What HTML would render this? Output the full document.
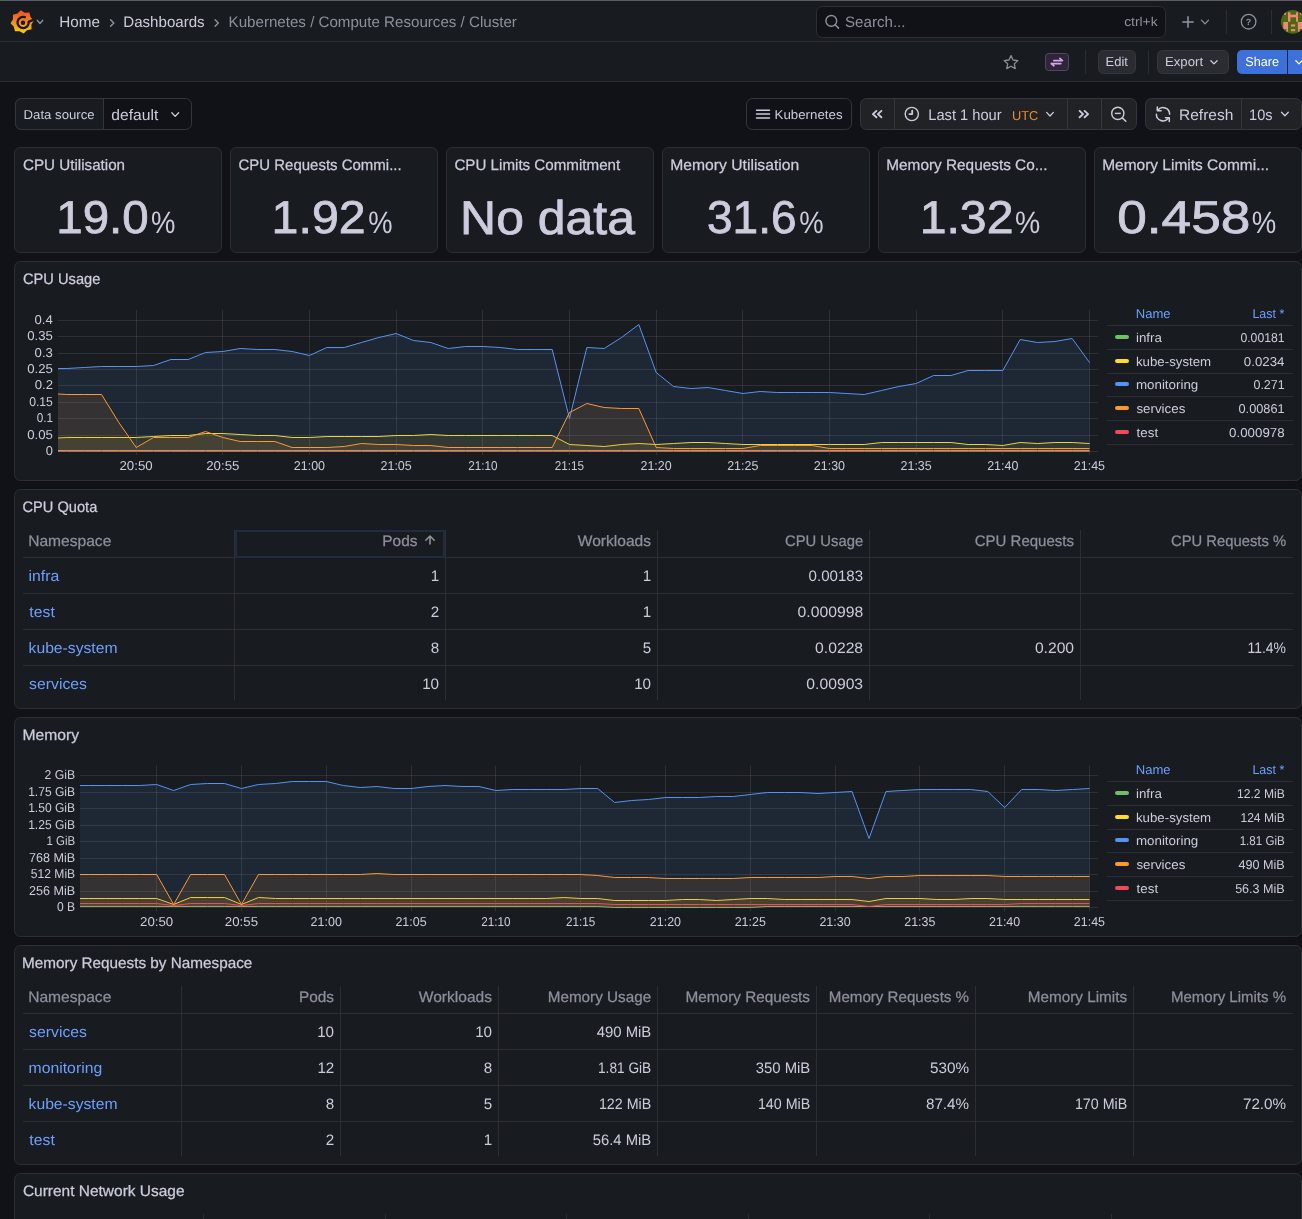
<!DOCTYPE html>
<html><head><meta charset="utf-8"><title>Kubernetes / Compute Resources / Cluster - Dashboards - Grafana</title>
<style>
html,body{margin:0;padding:0;background:#111217;width:1302px;height:1219px;overflow:hidden}
svg{display:block;font-family:"Liberation Sans", sans-serif;will-change:transform}
svg text{text-rendering:geometricPrecision}
</style></head><body>
<svg width="1302" height="1219" viewBox="0 0 1302 1219">
<rect x="0" y="0" width="1302" height="1219" rx="0" fill="#111217" />
<rect x="0" y="0" width="1302" height="82" rx="0" fill="#181b1f" />
<rect x="0" y="0" width="1302" height="1" rx="0" fill="#5c5b62" />
<rect x="0" y="41" width="1302" height="1" rx="0" fill="#2c2e34" />
<rect x="0" y="81" width="1302" height="1" rx="0" fill="#2c2e34" />
<defs><linearGradient id="glg" x1="0" y1="0" x2="0" y2="1"><stop offset="0.15" stop-color="#f55a25"/><stop offset="0.95" stop-color="#fcc80c"/></linearGradient></defs>
<path d="M20.76,10.19 L24.77,12.65 L29.46,12.60 L30.56,17.17 L33.91,20.46 L31.45,24.47 L31.50,29.16 L26.93,30.26 L23.64,33.61 L19.63,31.15 L14.94,31.20 L13.84,26.63 L10.49,23.34 L12.95,19.33 L12.90,14.64 L17.47,13.54Z" stroke="none" fill="url(#glg)" stroke-width="1" stroke="url(#glg)" stroke-width="1.4" stroke-linejoin="round"/>
<path d="M32.80,20.10 Q29.85,21.12 28.65,21.72 A5.6,5.6 0 1 1 24.83,17.17" stroke="#181b1f" fill="none" stroke-width="2.4" stroke-linecap="round" stroke-linejoin="round"/>
<circle cx="22.999999999999996" cy="22.8" r="2.2" fill="#181b1f"/>
<path d="M37.2,20.299999999999997 L40,23.5 L42.8,20.299999999999997" stroke="#8e8f9c" fill="none" stroke-width="1.3" stroke-linecap="round" stroke-linejoin="round"/>
<text x="59.18" y="27" font-size="15.2" fill="#ccccdc" textLength="40.75" lengthAdjust="spacingAndGlyphs" >Home</text>
<path d="M110.6,19.7 L113.8,23 L110.6,26.3" stroke="#8e8f9c" fill="none" stroke-width="1.5" stroke-linecap="round" stroke-linejoin="round"/>
<text x="123.29" y="27" font-size="15.2" fill="#ccccdc" textLength="81.37" lengthAdjust="spacingAndGlyphs" >Dashboards</text>
<path d="M215.1,19.7 L218.3,23 L215.1,26.3" stroke="#8e8f9c" fill="none" stroke-width="1.5" stroke-linecap="round" stroke-linejoin="round"/>
<text x="228.59" y="27" font-size="15.2" fill="#8e8f9c" textLength="288.31" lengthAdjust="spacingAndGlyphs" >Kubernetes / Compute Resources / Cluster</text>
<rect x="816.5" y="6.5" width="349" height="31" rx="6" fill="#111217" stroke="#2c2e34" stroke-width="1" />
<circle cx="831.3" cy="20.9" r="5.4" fill="none" stroke="#8e8f9c" stroke-width="1.4"/>
<line x1="835.2" y1="24.8" x2="838.5" y2="28.1" stroke="#8e8f9c" stroke-width="1.5" stroke-linecap="round"/>
<text x="845.02" y="27.1" font-size="15.2" fill="#8e8f9c" textLength="60.47" lengthAdjust="spacingAndGlyphs" >Search...</text>
<text x="1124.15" y="26.2" font-size="12.9" fill="#8e8f9c" textLength="33.48" lengthAdjust="spacingAndGlyphs" >ctrl+k</text>
<line x1="1182.3" y1="22" x2="1193.7" y2="22" stroke="#8e8f9c" stroke-width="1.6" />
<line x1="1188" y1="16.2" x2="1188" y2="27.8" stroke="#8e8f9c" stroke-width="1.6" />
<path d="M1201.5,20.15 L1205,23.85 L1208.5,20.15" stroke="#8e8f9c" fill="none" stroke-width="1.3" stroke-linecap="round" stroke-linejoin="round"/>
<rect x="1226" y="10" width="1" height="24" rx="0" fill="#2c2e34" />
<circle cx="1248.6" cy="21.7" r="7.3" fill="none" stroke="#8e8f9c" stroke-width="1.3"/>
<text x="1248.6" y="25.4" font-size="9" fill="#8e8f9c" text-anchor="middle" font-weight="bold" >?</text>
<rect x="1271" y="10" width="1" height="24" rx="0" fill="#2c2e34" />
<clipPath id="avc"><circle cx="1292.8" cy="21.8" r="11.9"/></clipPath>
<g clip-path="url(#avc)"><rect x="1280" y="9" width="24" height="26" fill="#4a6a10"/><rect x="1288" y="12.3" width="2.4" height="9.4" fill="#f5857c"/><rect x="1296" y="12.3" width="2" height="9.4" fill="#f5857c"/><rect x="1288" y="14.7" width="10" height="2.6" fill="#f5857c"/><rect x="1283.9" y="12.3" width="2.1" height="2.4" fill="#f5857c"/><rect x="1300" y="12.3" width="3" height="2.4" fill="#f5857c"/><rect x="1283.3" y="22" width="4.7" height="7.1" fill="#f5857c"/><rect x="1297.8" y="22" width="5" height="7.1" fill="#f5857c"/><rect x="1286.5" y="29" width="1.5" height="2.7" fill="#f5857c"/><rect x="1298" y="29" width="1.6" height="2.7" fill="#f5857c"/><rect x="1291" y="24.4" width="4.2" height="2.1" fill="#f5857c"/><rect x="1291" y="29.1" width="4.2" height="2.1" fill="#f5857c"/></g>
<path d="M1011.00,55.60 L1013.03,60.00 L1017.85,60.58 L1014.29,63.87 L1015.23,68.62 L1011.00,66.26 L1006.77,68.62 L1007.71,63.87 L1004.15,60.58 L1008.97,60.00Z" stroke="#8e8f9c" fill="none" stroke-width="1.3" stroke-linejoin="round"/>
<rect x="1045.5" y="53.5" width="23" height="17" rx="3" fill="#2e2638" stroke="#5a3f6e" stroke-width="1" />
<path d="M1053.8,60.6 L1062.4,60.6 M1059.9,58.3 L1062.4,60.6" stroke="#d2a6ea" fill="none" stroke-width="1.7" stroke-linecap="round" stroke-linejoin="round"/>
<path d="M1060.8,63.6 L1051.3,63.6 M1053.9,65.8 L1051.3,63.6" stroke="#d2a6ea" fill="none" stroke-width="1.7" stroke-linecap="round" stroke-linejoin="round"/>
<rect x="1085" y="50" width="1" height="24" rx="0" fill="#2c2e34" />
<rect x="1098.5" y="50.5" width="37" height="23" rx="5" fill="#2a2c31" stroke="#35373d" stroke-width="1" />
<text x="1105.56" y="65.8" font-size="12.9" fill="#ccccdc" textLength="22.34" lengthAdjust="spacingAndGlyphs" >Edit</text>
<rect x="1148" y="50" width="1" height="24" rx="0" fill="#2c2e34" />
<rect x="1157.5" y="50.5" width="71" height="23" rx="5" fill="#2a2c31" stroke="#35373d" stroke-width="1" />
<text x="1164.94" y="65.8" font-size="12.9" fill="#ccccdc" textLength="38.19" lengthAdjust="spacingAndGlyphs" >Export</text>
<path d="M1210.9,60.699999999999996 L1214,63.9 L1217.1,60.699999999999996" stroke="#ccccdc" fill="none" stroke-width="1.3" stroke-linecap="round" stroke-linejoin="round"/>
<rect x="1237" y="50" width="80" height="24" rx="5" fill="#3d71d9" />
<rect x="1287" y="50" width="1" height="24" rx="0" fill="#1c2438" />
<text x="1245.23" y="66" font-size="12.9" fill="#ffffff" textLength="33.78" lengthAdjust="spacingAndGlyphs" >Share</text>
<path d="M1295.9,60.699999999999996 L1299,63.9 L1302.1,60.699999999999996" stroke="#ffffff" fill="none" stroke-width="1.3" stroke-linecap="round" stroke-linejoin="round"/>
<rect x="15.5" y="98.5" width="176" height="31" rx="6" fill="#111217" stroke="#34363c" stroke-width="1" />
<path d="M21.5,98.5 L103.5,98.5 L103.5,129.5 L21.5,129.5 A6,6 0 0 1 15.5,123.5 L15.5,104.5 A6,6 0 0 1 21.5,98.5Z" fill="#181b1f" stroke="#34363c"/>
<text x="23.55" y="119.2" font-size="12.9" fill="#ccccdc" textLength="71.07" lengthAdjust="spacingAndGlyphs" >Data source</text>
<text x="111.37" y="120" font-size="15.2" fill="#ccccdc" textLength="46.94" lengthAdjust="spacingAndGlyphs" >default</text>
<path d="M171.79999999999998,112.8 L175.2,116.39999999999999 L178.6,112.8" stroke="#ccccdc" fill="none" stroke-width="1.3" stroke-linecap="round" stroke-linejoin="round"/>
<rect x="746.5" y="98.5" width="105" height="31" rx="6" fill="#111217" stroke="#34363c" stroke-width="1" />
<line x1="756.5" y1="110.2" x2="769.5" y2="110.2" stroke="#ccccdc" stroke-width="1.5" stroke-linecap="round"/>
<line x1="756.5" y1="114.1" x2="769.5" y2="114.1" stroke="#ccccdc" stroke-width="1.5" stroke-linecap="round"/>
<line x1="756.5" y1="118" x2="769.5" y2="118" stroke="#ccccdc" stroke-width="1.5" stroke-linecap="round"/>
<text x="774.54" y="119.2" font-size="12.9" fill="#ccccdc" textLength="68.03" lengthAdjust="spacingAndGlyphs" >Kubernetes</text>
<rect x="860.5" y="98.5" width="276" height="31" rx="6" fill="#202226" stroke="#34363c" stroke-width="1" />
<rect x="894" y="99" width="1" height="30" rx="0" fill="#34363c" />
<rect x="1067" y="99" width="1" height="30" rx="0" fill="#34363c" />
<rect x="1101" y="99" width="1" height="30" rx="0" fill="#34363c" />
<path d="M876.4,110.9 L872.9,114.1 L876.4,117.3 M881.4,110.9 L877.9,114.1 L881.4,117.3" stroke="#ccccdc" fill="none" stroke-width="1.9" stroke-linecap="round" stroke-linejoin="round"/>
<circle cx="911.8" cy="114" r="6.6" fill="none" stroke="#ccccdc" stroke-width="1.4"/>
<path d="M912.2,110.6 L912.2,114.1 L909.4,114.1" stroke="#ccccdc" fill="none" stroke-width="1.8" stroke-linecap="round" stroke-linejoin="round"/>
<text x="928.23" y="119.8" font-size="15.2" fill="#ccccdc" textLength="73.45" lengthAdjust="spacingAndGlyphs" >Last 1 hour</text>
<text x="1011.94" y="119.8" font-size="12.9" fill="#eb8b2a" textLength="26.31" lengthAdjust="spacingAndGlyphs" >UTC</text>
<path d="M1046.6,112.4 L1050,116.0 L1053.4,112.4" stroke="#ccccdc" fill="none" stroke-width="1.3" stroke-linecap="round" stroke-linejoin="round"/>
<path d="M1079.6,110.9 L1083.1,114.1 L1079.6,117.3 M1084.6,110.9 L1088.1,114.1 L1084.6,117.3" stroke="#ccccdc" fill="none" stroke-width="1.9" stroke-linecap="round" stroke-linejoin="round"/>
<circle cx="1117.8" cy="113.4" r="6.1" fill="none" stroke="#ccccdc" stroke-width="1.4"/>
<line x1="1114.8" y1="113.4" x2="1120.8" y2="113.4" stroke="#ccccdc" stroke-width="1.4" />
<line x1="1122.3" y1="117.9" x2="1125.8" y2="121.2" stroke="#ccccdc" stroke-width="1.5" stroke-linecap="round"/>
<rect x="1145.5" y="98.5" width="156" height="31" rx="6" fill="#202226" stroke="#34363c" stroke-width="1" />
<rect x="1241" y="99" width="1" height="30" rx="0" fill="#34363c" />
<path d="M1157.9,110.1 A6.6,6.6 0 0 1 1169.6,114.3 M1156.4,114.3 A6.6,6.6 0 0 0 1168.1,118.5" stroke="#ccccdc" fill="none" stroke-width="1.5" stroke-linecap="round"/>
<path d="M1157.3,106.9 L1157.3,110.8 L1161.2,110.8 M1169.3,121.6 L1169.3,117.7 L1165.4,117.7" stroke="#ccccdc" fill="none" stroke-width="1.5" stroke-linecap="round" stroke-linejoin="round"/>
<text x="1178.96" y="120.1" font-size="15.2" fill="#ccccdc" textLength="54.48" lengthAdjust="spacingAndGlyphs" >Refresh</text>
<text x="1249.11" y="120.1" font-size="15.2" fill="#ccccdc" textLength="23.43" lengthAdjust="spacingAndGlyphs" >10s</text>
<path d="M1281.5,112.2 L1284.9,115.8 L1288.3000000000002,112.2" stroke="#ccccdc" fill="none" stroke-width="1.3" stroke-linecap="round" stroke-linejoin="round"/>
<rect x="14.5" y="147.5" width="207" height="105" rx="6" fill="#181b1f" stroke="#2c2e34" stroke-width="1" />
<text x="22.94" y="169.8" font-size="15.2" fill="#ccccdc" stroke="#ccccdc" stroke-width="0.25">CPU Utilisation</text>
<text x="56.34" y="232.9" font-size="45.96857142857143" fill="#ccccdc" textLength="92.38" lengthAdjust="spacingAndGlyphs" stroke="#ccccdc" stroke-width="0.8">19.0</text>
<text x="151.04" y="233.0" font-size="31.038129496402888" fill="#ccccdc" textLength="24.40" lengthAdjust="spacingAndGlyphs" >%</text>
<rect x="230.5" y="147.5" width="207" height="105" rx="6" fill="#181b1f" stroke="#2c2e34" stroke-width="1" />
<text x="238.45" y="169.8" font-size="15.2" fill="#ccccdc" textLength="163.22" lengthAdjust="spacingAndGlyphs" stroke="#ccccdc" stroke-width="0.25">CPU Requests Commi...</text>
<text x="271.57" y="232.9" font-size="45.96857142857143" fill="#ccccdc" textLength="94.11" lengthAdjust="spacingAndGlyphs" stroke="#ccccdc" stroke-width="0.8">1.92</text>
<text x="368.24" y="233.0" font-size="31.038129496402888" fill="#ccccdc" textLength="24.29" lengthAdjust="spacingAndGlyphs" >%</text>
<rect x="446.5" y="147.5" width="207" height="105" rx="6" fill="#181b1f" stroke="#2c2e34" stroke-width="1" />
<text x="454.44" y="169.8" font-size="15.2" fill="#ccccdc" textLength="165.75" lengthAdjust="spacingAndGlyphs" stroke="#ccccdc" stroke-width="0.25">CPU Limits Commitment</text>
<text x="460.10" y="233.5" font-size="47.32413793103448" fill="#ccccdc" textLength="174.92" lengthAdjust="spacingAndGlyphs" stroke="#ccccdc" stroke-width="0.8">No data</text>
<rect x="662.5" y="147.5" width="207" height="105" rx="6" fill="#181b1f" stroke="#2c2e34" stroke-width="1" />
<text x="670.25" y="169.8" font-size="15.2" fill="#ccccdc" textLength="128.96" lengthAdjust="spacingAndGlyphs" stroke="#ccccdc" stroke-width="0.25">Memory Utilisation</text>
<text x="707.06" y="232.9" font-size="45.96857142857143" fill="#ccccdc" stroke="#ccccdc" stroke-width="0.8">31.6</text>
<text x="799.34" y="233.0" font-size="31.038129496402888" fill="#ccccdc" textLength="24.40" lengthAdjust="spacingAndGlyphs" >%</text>
<rect x="878.5" y="147.5" width="207" height="105" rx="6" fill="#181b1f" stroke="#2c2e34" stroke-width="1" />
<text x="886.27" y="169.8" font-size="15.2" fill="#ccccdc" textLength="161.27" lengthAdjust="spacingAndGlyphs" stroke="#ccccdc" stroke-width="0.25">Memory Requests Co...</text>
<text x="919.69" y="232.9" font-size="45.96857142857143" fill="#ccccdc" textLength="93.79" lengthAdjust="spacingAndGlyphs" stroke="#ccccdc" stroke-width="0.8">1.32</text>
<text x="1014.91" y="233.0" font-size="31.038129496402888" fill="#ccccdc" textLength="25.26" lengthAdjust="spacingAndGlyphs" >%</text>
<rect x="1094.5" y="147.5" width="207" height="105" rx="6" fill="#181b1f" stroke="#2c2e34" stroke-width="1" />
<text x="1102.16" y="169.8" font-size="15.2" fill="#ccccdc" textLength="166.89" lengthAdjust="spacingAndGlyphs" stroke="#ccccdc" stroke-width="0.25">Memory Limits Commi...</text>
<text x="1117.27" y="232.9" font-size="45.96857142857143" fill="#ccccdc" textLength="133.09" lengthAdjust="spacingAndGlyphs" stroke="#ccccdc" stroke-width="0.8">0.458</text>
<text x="1251.64" y="233.0" font-size="31.038129496402888" fill="#ccccdc" textLength="24.51" lengthAdjust="spacingAndGlyphs" >%</text>
<rect x="14.5" y="261.5" width="1287" height="219" rx="6" fill="#181b1f" stroke="#2c2e34" stroke-width="1" />
<rect x="14.5" y="489.5" width="1287" height="219" rx="6" fill="#181b1f" stroke="#2c2e34" stroke-width="1" />
<rect x="14.5" y="717.5" width="1287" height="219" rx="6" fill="#181b1f" stroke="#2c2e34" stroke-width="1" />
<rect x="14.5" y="945.5" width="1287" height="219" rx="6" fill="#181b1f" stroke="#2c2e34" stroke-width="1" />
<rect x="14.5" y="1173.5" width="1287" height="119" rx="6" fill="#181b1f" stroke="#2c2e34" stroke-width="1" />
<text x="22.97" y="283.9" font-size="15.2" fill="#ccccdc" textLength="77.39" lengthAdjust="spacingAndGlyphs" stroke="#ccccdc" stroke-width="0.25">CPU Usage</text>
<text x="22.47" y="512" font-size="15.2" fill="#ccccdc" textLength="74.88" lengthAdjust="spacingAndGlyphs" stroke="#ccccdc" stroke-width="0.25">CPU Quota</text>
<text x="22.45" y="739.9" font-size="15.2" fill="#ccccdc" textLength="56.58" lengthAdjust="spacingAndGlyphs" stroke="#ccccdc" stroke-width="0.25">Memory</text>
<text x="22.08" y="968.3" font-size="15.2" fill="#ccccdc" textLength="230.24" lengthAdjust="spacingAndGlyphs" stroke="#ccccdc" stroke-width="0.25">Memory Requests by Namespace</text>
<text x="22.93" y="1195.7" font-size="15.2" fill="#ccccdc" textLength="161.62" lengthAdjust="spacingAndGlyphs" stroke="#ccccdc" stroke-width="0.25">Current Network Usage</text>
<rect x="234" y="530" width="1" height="170" rx="0" fill="#2c2e34" />
<rect x="445" y="530" width="1" height="170" rx="0" fill="#2c2e34" />
<rect x="657" y="530" width="1" height="170" rx="0" fill="#2c2e34" />
<rect x="869" y="530" width="1" height="170" rx="0" fill="#2c2e34" />
<rect x="1080" y="530" width="1" height="170" rx="0" fill="#2c2e34" />
<rect x="23" y="557" width="1270" height="1" rx="0" fill="#2c2e34" />
<rect x="23" y="593" width="1270" height="1" rx="0" fill="#2c2e34" />
<rect x="23" y="629" width="1270" height="1" rx="0" fill="#2c2e34" />
<rect x="23" y="665" width="1270" height="1" rx="0" fill="#2c2e34" />
<rect x="236" y="531" width="208" height="26" rx="0" fill="none" stroke="#202b3f" stroke-width="2" />
<text x="28.15" y="546" font-size="15.2" fill="#8e8f9c" textLength="83.21" lengthAdjust="spacingAndGlyphs" stroke="#8e8f9c" stroke-width="0.25">Namespace</text>
<path d="M430.0,544 L430.0,536 M425.8,540.2 L430.0,536 L434.2,540.2" stroke="#8e8f9c" fill="none" stroke-width="1.6" stroke-linecap="round" stroke-linejoin="round"/>
<text x="382.32" y="546" font-size="15.2" fill="#8e8f9c" textLength="35.11" lengthAdjust="spacingAndGlyphs" stroke="#8e8f9c" stroke-width="0.25">Pods</text>
<text x="577.82" y="546" font-size="15.2" fill="#8e8f9c" textLength="73.23" lengthAdjust="spacingAndGlyphs" stroke="#8e8f9c" stroke-width="0.25">Workloads</text>
<text x="784.95" y="546" font-size="15.2" fill="#8e8f9c" textLength="78.22" lengthAdjust="spacingAndGlyphs" stroke="#8e8f9c" stroke-width="0.25">CPU Usage</text>
<text x="974.76" y="546" font-size="15.2" fill="#8e8f9c" textLength="99.24" lengthAdjust="spacingAndGlyphs" stroke="#8e8f9c" stroke-width="0.25">CPU Requests</text>
<text x="1171.09" y="546" font-size="15.2" fill="#8e8f9c" textLength="114.94" lengthAdjust="spacingAndGlyphs" stroke="#8e8f9c" stroke-width="0.25">CPU Requests %</text>
<text x="28.57" y="581" font-size="15.2" fill="#6e9fff" textLength="30.69" lengthAdjust="spacingAndGlyphs" >infra</text>
<text x="430.75" y="581" font-size="15.2" fill="#ccccdc" >1</text>
<text x="642.75" y="581" font-size="15.2" fill="#ccccdc" >1</text>
<text x="808.59" y="581" font-size="15.2" fill="#ccccdc" textLength="54.51" lengthAdjust="spacingAndGlyphs" >0.00183</text>
<text x="29.36" y="617" font-size="15.2" fill="#6e9fff" textLength="25.40" lengthAdjust="spacingAndGlyphs" >test</text>
<text x="430.82" y="617" font-size="15.2" fill="#ccccdc" >2</text>
<text x="642.75" y="617" font-size="15.2" fill="#ccccdc" >1</text>
<text x="797.57" y="617" font-size="15.2" fill="#ccccdc" textLength="65.58" lengthAdjust="spacingAndGlyphs" >0.000998</text>
<text x="28.58" y="653" font-size="15.2" fill="#6e9fff" textLength="88.88" lengthAdjust="spacingAndGlyphs" >kube-system</text>
<text x="430.67" y="653" font-size="15.2" fill="#ccccdc" >8</text>
<text x="642.67" y="653" font-size="15.2" fill="#ccccdc" >5</text>
<text x="815.12" y="653" font-size="15.2" fill="#ccccdc" textLength="47.99" lengthAdjust="spacingAndGlyphs" >0.0228</text>
<text x="1034.90" y="653" font-size="15.2" fill="#ccccdc" textLength="39.19" lengthAdjust="spacingAndGlyphs" >0.200</text>
<text x="1247.52" y="653" font-size="15.2" fill="#ccccdc" textLength="38.49" lengthAdjust="spacingAndGlyphs" >11.4%</text>
<text x="29.13" y="689" font-size="15.2" fill="#6e9fff" textLength="57.81" lengthAdjust="spacingAndGlyphs" >services</text>
<text x="422.16" y="689" font-size="15.2" fill="#ccccdc" >10</text>
<text x="634.16" y="689" font-size="15.2" fill="#ccccdc" >10</text>
<text x="806.34" y="689" font-size="15.2" fill="#ccccdc" textLength="56.78" lengthAdjust="spacingAndGlyphs" >0.00903</text>
<rect x="181" y="986" width="1" height="170" rx="0" fill="#2c2e34" />
<rect x="340" y="986" width="1" height="170" rx="0" fill="#2c2e34" />
<rect x="498" y="986" width="1" height="170" rx="0" fill="#2c2e34" />
<rect x="657" y="986" width="1" height="170" rx="0" fill="#2c2e34" />
<rect x="816" y="986" width="1" height="170" rx="0" fill="#2c2e34" />
<rect x="975" y="986" width="1" height="170" rx="0" fill="#2c2e34" />
<rect x="1133" y="986" width="1" height="170" rx="0" fill="#2c2e34" />
<rect x="23" y="1013" width="1270" height="1" rx="0" fill="#2c2e34" />
<rect x="23" y="1049" width="1270" height="1" rx="0" fill="#2c2e34" />
<rect x="23" y="1085" width="1270" height="1" rx="0" fill="#2c2e34" />
<rect x="23" y="1121" width="1270" height="1" rx="0" fill="#2c2e34" />
<text x="28.15" y="1002" font-size="15.2" fill="#8e8f9c" textLength="83.21" lengthAdjust="spacingAndGlyphs" stroke="#8e8f9c" stroke-width="0.25">Namespace</text>
<text x="298.92" y="1002" font-size="15.2" fill="#8e8f9c" textLength="35.11" lengthAdjust="spacingAndGlyphs" stroke="#8e8f9c" stroke-width="0.25">Pods</text>
<text x="418.82" y="1002" font-size="15.2" fill="#8e8f9c" textLength="73.23" lengthAdjust="spacingAndGlyphs" stroke="#8e8f9c" stroke-width="0.25">Workloads</text>
<text x="547.68" y="1002" font-size="15.2" fill="#8e8f9c" textLength="103.50" lengthAdjust="spacingAndGlyphs" stroke="#8e8f9c" stroke-width="0.25">Memory Usage</text>
<text x="685.50" y="1002" font-size="15.2" fill="#8e8f9c" textLength="124.52" lengthAdjust="spacingAndGlyphs" stroke="#8e8f9c" stroke-width="0.25">Memory Requests</text>
<text x="828.83" y="1002" font-size="15.2" fill="#8e8f9c" textLength="140.21" lengthAdjust="spacingAndGlyphs" stroke="#8e8f9c" stroke-width="0.25">Memory Requests %</text>
<text x="1027.73" y="1002" font-size="15.2" fill="#8e8f9c" textLength="99.31" lengthAdjust="spacingAndGlyphs" stroke="#8e8f9c" stroke-width="0.25">Memory Limits</text>
<text x="1170.99" y="1002" font-size="15.2" fill="#8e8f9c" textLength="115.00" lengthAdjust="spacingAndGlyphs" stroke="#8e8f9c" stroke-width="0.25">Memory Limits %</text>
<text x="29.13" y="1037" font-size="15.2" fill="#6e9fff" textLength="57.81" lengthAdjust="spacingAndGlyphs" >services</text>
<text x="317.16" y="1037" font-size="15.2" fill="#ccccdc" >10</text>
<text x="475.16" y="1037" font-size="15.2" fill="#ccccdc" >10</text>
<text x="596.67" y="1037" font-size="15.2" fill="#ccccdc" textLength="54.63" lengthAdjust="spacingAndGlyphs" >490 MiB</text>
<text x="28.57" y="1073" font-size="15.2" fill="#6e9fff" textLength="73.64" lengthAdjust="spacingAndGlyphs" >monitoring</text>
<text x="317.39" y="1073" font-size="15.2" fill="#ccccdc" >12</text>
<text x="483.67" y="1073" font-size="15.2" fill="#ccccdc" >8</text>
<text x="598.00" y="1073" font-size="15.2" fill="#ccccdc" textLength="53.20" lengthAdjust="spacingAndGlyphs" >1.81 GiB</text>
<text x="755.67" y="1073" font-size="15.2" fill="#ccccdc" textLength="54.63" lengthAdjust="spacingAndGlyphs" >350 MiB</text>
<text x="929.90" y="1073" font-size="15.2" fill="#ccccdc" textLength="39.10" lengthAdjust="spacingAndGlyphs" >530%</text>
<text x="28.58" y="1109" font-size="15.2" fill="#6e9fff" textLength="88.88" lengthAdjust="spacingAndGlyphs" >kube-system</text>
<text x="325.67" y="1109" font-size="15.2" fill="#ccccdc" >8</text>
<text x="483.67" y="1109" font-size="15.2" fill="#ccccdc" >5</text>
<text x="598.94" y="1109" font-size="15.2" fill="#ccccdc" textLength="52.32" lengthAdjust="spacingAndGlyphs" >122 MiB</text>
<text x="757.94" y="1109" font-size="15.2" fill="#ccccdc" textLength="52.32" lengthAdjust="spacingAndGlyphs" >140 MiB</text>
<text x="925.98" y="1109" font-size="15.2" fill="#ccccdc" >87.4%</text>
<text x="1074.94" y="1109" font-size="15.2" fill="#ccccdc" textLength="52.32" lengthAdjust="spacingAndGlyphs" >170 MiB</text>
<text x="1242.98" y="1109" font-size="15.2" fill="#ccccdc" >72.0%</text>
<text x="29.36" y="1145" font-size="15.2" fill="#6e9fff" textLength="25.40" lengthAdjust="spacingAndGlyphs" >test</text>
<text x="325.82" y="1145" font-size="15.2" fill="#ccccdc" >2</text>
<text x="483.75" y="1145" font-size="15.2" fill="#ccccdc" >1</text>
<text x="592.67" y="1145" font-size="15.2" fill="#ccccdc" textLength="58.59" lengthAdjust="spacingAndGlyphs" >56.4 MiB</text>
<rect x="203" y="1214" width="1" height="10" rx="0" fill="#2c2e34" />
<rect x="385" y="1214" width="1" height="10" rx="0" fill="#2c2e34" />
<rect x="566" y="1214" width="1" height="10" rx="0" fill="#2c2e34" />
<rect x="748" y="1214" width="1" height="10" rx="0" fill="#2c2e34" />
<rect x="929" y="1214" width="1" height="10" rx="0" fill="#2c2e34" />
<rect x="1111" y="1214" width="1" height="10" rx="0" fill="#2c2e34" />
<rect x="58" y="451" width="1040" height="1" rx="0" fill="rgba(204,204,220,0.12)" />
<rect x="58" y="435" width="1040" height="1" rx="0" fill="rgba(204,204,220,0.12)" />
<rect x="58" y="418" width="1040" height="1" rx="0" fill="rgba(204,204,220,0.12)" />
<rect x="58" y="402" width="1040" height="1" rx="0" fill="rgba(204,204,220,0.12)" />
<rect x="58" y="385" width="1040" height="1" rx="0" fill="rgba(204,204,220,0.12)" />
<rect x="58" y="369" width="1040" height="1" rx="0" fill="rgba(204,204,220,0.12)" />
<rect x="58" y="353" width="1040" height="1" rx="0" fill="rgba(204,204,220,0.12)" />
<rect x="58" y="336" width="1040" height="1" rx="0" fill="rgba(204,204,220,0.12)" />
<rect x="58" y="320" width="1040" height="1" rx="0" fill="rgba(204,204,220,0.12)" />
<rect x="136" y="310" width="1" height="145" rx="0" fill="rgba(204,204,220,0.12)" />
<rect x="222" y="310" width="1" height="145" rx="0" fill="rgba(204,204,220,0.12)" />
<rect x="309" y="310" width="1" height="145" rx="0" fill="rgba(204,204,220,0.12)" />
<rect x="396" y="310" width="1" height="145" rx="0" fill="rgba(204,204,220,0.12)" />
<rect x="482" y="310" width="1" height="145" rx="0" fill="rgba(204,204,220,0.12)" />
<rect x="569" y="310" width="1" height="145" rx="0" fill="rgba(204,204,220,0.12)" />
<rect x="656" y="310" width="1" height="145" rx="0" fill="rgba(204,204,220,0.12)" />
<rect x="742" y="310" width="1" height="145" rx="0" fill="rgba(204,204,220,0.12)" />
<rect x="829" y="310" width="1" height="145" rx="0" fill="rgba(204,204,220,0.12)" />
<rect x="916" y="310" width="1" height="145" rx="0" fill="rgba(204,204,220,0.12)" />
<rect x="1002" y="310" width="1" height="145" rx="0" fill="rgba(204,204,220,0.12)" />
<rect x="1089" y="310" width="1" height="145" rx="0" fill="rgba(204,204,220,0.12)" />
<clipPath id="cpuclip"><rect x="58" y="290" width="1032.3" height="165"/></clipPath>
<g clip-path="url(#cpuclip)">
<path d="M49.52,450.50 L66.85,450.50 L84.19,450.50 L101.52,450.50 L118.85,450.50 L136.19,450.50 L153.52,450.50 L170.85,450.50 L188.18,450.50 L205.52,450.50 L222.85,450.50 L240.18,450.50 L257.52,450.50 L274.85,450.50 L292.18,450.50 L309.52,450.50 L326.85,450.50 L344.18,450.50 L361.51,450.50 L378.85,450.50 L396.18,450.50 L413.51,450.50 L430.85,450.50 L448.18,450.50 L465.51,450.50 L482.85,450.50 L500.18,450.50 L517.51,450.50 L534.84,450.50 L552.18,450.50 L569.51,450.50 L586.84,450.50 L604.18,450.50 L621.51,450.50 L638.84,450.50 L656.18,450.50 L673.51,450.50 L690.84,450.50 L708.17,450.50 L725.51,450.50 L742.84,450.50 L760.17,450.50 L777.51,450.50 L794.84,450.50 L812.17,450.50 L829.50,450.50 L846.84,450.50 L864.17,450.50 L881.50,450.50 L898.84,450.50 L916.17,450.50 L933.50,450.50 L950.84,450.50 L968.17,450.50 L985.50,450.50 L1002.84,450.50 L1020.17,450.50 L1037.50,450.50 L1054.83,450.50 L1072.17,450.50 L1089.50,450.50 L1089.50,450.8 L49.52,450.8 Z" stroke="none" fill="#73bf69" stroke-width="1" fill-opacity="0.1"/>
<path d="M49.52,450.50 L66.85,450.50 L84.19,450.50 L101.52,450.50 L118.85,450.50 L136.19,450.50 L153.52,450.50 L170.85,450.50 L188.18,450.50 L205.52,450.50 L222.85,450.50 L240.18,450.50 L257.52,450.50 L274.85,450.50 L292.18,450.50 L309.52,450.50 L326.85,450.50 L344.18,450.50 L361.51,450.50 L378.85,450.50 L396.18,450.50 L413.51,450.50 L430.85,450.50 L448.18,450.50 L465.51,450.50 L482.85,450.50 L500.18,450.50 L517.51,450.50 L534.84,450.50 L552.18,450.50 L569.51,450.50 L586.84,450.50 L604.18,450.50 L621.51,450.50 L638.84,450.50 L656.18,450.50 L673.51,450.50 L690.84,450.50 L708.17,450.50 L725.51,450.50 L742.84,450.50 L760.17,450.50 L777.51,450.50 L794.84,450.50 L812.17,450.50 L829.50,450.50 L846.84,450.50 L864.17,450.50 L881.50,450.50 L898.84,450.50 L916.17,450.50 L933.50,450.50 L950.84,450.50 L968.17,450.50 L985.50,450.50 L1002.84,450.50 L1020.17,450.50 L1037.50,450.50 L1054.83,450.50 L1072.17,450.50 L1089.50,450.50" stroke="#73bf69" fill="none" stroke-width="1" stroke-linejoin="round"/>
<path d="M49.52,438.50 L66.85,437.50 L84.19,437.50 L101.52,437.50 L118.85,437.50 L136.19,437.50 L153.52,436.50 L170.85,435.50 L188.18,435.50 L205.52,433.50 L222.85,433.50 L240.18,434.50 L257.52,435.50 L274.85,435.50 L292.18,437.50 L309.52,437.50 L326.85,436.50 L344.18,436.50 L361.51,436.50 L378.85,436.50 L396.18,435.50 L413.51,435.50 L430.85,434.50 L448.18,435.50 L465.51,435.50 L482.85,435.50 L500.18,435.50 L517.51,435.50 L534.84,435.50 L552.18,435.50 L569.51,444.50 L586.84,445.50 L604.18,446.50 L621.51,444.50 L638.84,443.50 L656.18,444.50 L673.51,443.50 L690.84,442.50 L708.17,442.50 L725.51,443.50 L742.84,444.50 L760.17,444.50 L777.51,444.50 L794.84,444.50 L812.17,444.50 L829.50,444.50 L846.84,444.50 L864.17,444.50 L881.50,442.50 L898.84,442.50 L916.17,442.50 L933.50,442.50 L950.84,442.50 L968.17,444.50 L985.50,444.50 L1002.84,445.50 L1020.17,442.50 L1037.50,443.50 L1054.83,442.50 L1072.17,442.50 L1089.50,443.50 L1089.50,450.8 L49.52,450.8 Z" stroke="none" fill="#fade2a" stroke-width="1" fill-opacity="0.1"/>
<path d="M49.52,438.50 L66.85,437.50 L84.19,437.50 L101.52,437.50 L118.85,437.50 L136.19,437.50 L153.52,436.50 L170.85,435.50 L188.18,435.50 L205.52,433.50 L222.85,433.50 L240.18,434.50 L257.52,435.50 L274.85,435.50 L292.18,437.50 L309.52,437.50 L326.85,436.50 L344.18,436.50 L361.51,436.50 L378.85,436.50 L396.18,435.50 L413.51,435.50 L430.85,434.50 L448.18,435.50 L465.51,435.50 L482.85,435.50 L500.18,435.50 L517.51,435.50 L534.84,435.50 L552.18,435.50 L569.51,444.50 L586.84,445.50 L604.18,446.50 L621.51,444.50 L638.84,443.50 L656.18,444.50 L673.51,443.50 L690.84,442.50 L708.17,442.50 L725.51,443.50 L742.84,444.50 L760.17,444.50 L777.51,444.50 L794.84,444.50 L812.17,444.50 L829.50,444.50 L846.84,444.50 L864.17,444.50 L881.50,442.50 L898.84,442.50 L916.17,442.50 L933.50,442.50 L950.84,442.50 L968.17,444.50 L985.50,444.50 L1002.84,445.50 L1020.17,442.50 L1037.50,443.50 L1054.83,442.50 L1072.17,442.50 L1089.50,443.50" stroke="#fade2a" fill="none" stroke-width="1" stroke-linejoin="round"/>
<path d="M49.52,368.50 L66.85,368.50 L84.19,367.50 L101.52,366.50 L118.85,366.50 L136.19,366.50 L153.52,365.50 L170.85,359.50 L188.18,359.50 L205.52,352.50 L222.85,351.50 L240.18,348.50 L257.52,349.50 L274.85,349.50 L292.18,351.50 L309.52,355.50 L326.85,347.50 L344.18,347.50 L361.51,342.50 L378.85,337.50 L396.18,333.50 L413.51,340.50 L430.85,342.50 L448.18,348.50 L465.51,346.50 L482.85,346.50 L500.18,347.50 L517.51,349.50 L534.84,349.50 L552.18,349.50 L569.51,418.50 L586.84,347.50 L604.18,348.50 L621.51,337.50 L638.84,324.50 L656.18,372.50 L673.51,386.50 L690.84,388.50 L708.17,387.50 L725.51,390.50 L742.84,393.50 L760.17,391.50 L777.51,392.50 L794.84,392.50 L812.17,392.50 L829.50,392.50 L846.84,393.50 L864.17,394.50 L881.50,390.50 L898.84,386.50 L916.17,383.50 L933.50,375.50 L950.84,375.50 L968.17,370.50 L985.50,370.50 L1002.84,370.50 L1020.17,339.50 L1037.50,342.50 L1054.83,341.50 L1072.17,338.50 L1089.50,362.50 L1089.50,450.8 L49.52,450.8 Z" stroke="none" fill="#5794f2" stroke-width="1" fill-opacity="0.1"/>
<path d="M49.52,368.50 L66.85,368.50 L84.19,367.50 L101.52,366.50 L118.85,366.50 L136.19,366.50 L153.52,365.50 L170.85,359.50 L188.18,359.50 L205.52,352.50 L222.85,351.50 L240.18,348.50 L257.52,349.50 L274.85,349.50 L292.18,351.50 L309.52,355.50 L326.85,347.50 L344.18,347.50 L361.51,342.50 L378.85,337.50 L396.18,333.50 L413.51,340.50 L430.85,342.50 L448.18,348.50 L465.51,346.50 L482.85,346.50 L500.18,347.50 L517.51,349.50 L534.84,349.50 L552.18,349.50 L569.51,418.50 L586.84,347.50 L604.18,348.50 L621.51,337.50 L638.84,324.50 L656.18,372.50 L673.51,386.50 L690.84,388.50 L708.17,387.50 L725.51,390.50 L742.84,393.50 L760.17,391.50 L777.51,392.50 L794.84,392.50 L812.17,392.50 L829.50,392.50 L846.84,393.50 L864.17,394.50 L881.50,390.50 L898.84,386.50 L916.17,383.50 L933.50,375.50 L950.84,375.50 L968.17,370.50 L985.50,370.50 L1002.84,370.50 L1020.17,339.50 L1037.50,342.50 L1054.83,341.50 L1072.17,338.50 L1089.50,362.50" stroke="#5794f2" fill="none" stroke-width="1" stroke-linejoin="round"/>
<path d="M49.52,393.50 L66.85,394.50 L84.19,394.50 L101.52,394.50 L118.85,422.50 L136.19,447.50 L153.52,437.50 L170.85,437.50 L188.18,437.50 L205.52,431.50 L222.85,437.50 L240.18,441.50 L257.52,441.50 L274.85,441.50 L292.18,447.50 L309.52,447.50 L326.85,447.50 L344.18,446.50 L361.51,443.50 L378.85,444.50 L396.18,444.50 L413.51,445.50 L430.85,445.50 L448.18,447.50 L465.51,447.50 L482.85,447.50 L500.18,447.50 L517.51,447.50 L534.84,447.50 L552.18,447.50 L569.51,412.50 L586.84,403.50 L604.18,407.50 L621.51,408.50 L638.84,408.50 L656.18,447.50 L673.51,448.50 L690.84,448.50 L708.17,448.50 L725.51,448.50 L742.84,448.50 L760.17,445.50 L777.51,445.50 L794.84,445.50 L812.17,445.50 L829.50,448.50 L846.84,448.50 L864.17,448.50 L881.50,448.50 L898.84,448.50 L916.17,448.50 L933.50,448.50 L950.84,448.50 L968.17,448.50 L985.50,448.50 L1002.84,448.50 L1020.17,448.50 L1037.50,448.50 L1054.83,448.50 L1072.17,448.50 L1089.50,448.50 L1089.50,450.8 L49.52,450.8 Z" stroke="none" fill="#ff9830" stroke-width="1" fill-opacity="0.1"/>
<path d="M49.52,393.50 L66.85,394.50 L84.19,394.50 L101.52,394.50 L118.85,422.50 L136.19,447.50 L153.52,437.50 L170.85,437.50 L188.18,437.50 L205.52,431.50 L222.85,437.50 L240.18,441.50 L257.52,441.50 L274.85,441.50 L292.18,447.50 L309.52,447.50 L326.85,447.50 L344.18,446.50 L361.51,443.50 L378.85,444.50 L396.18,444.50 L413.51,445.50 L430.85,445.50 L448.18,447.50 L465.51,447.50 L482.85,447.50 L500.18,447.50 L517.51,447.50 L534.84,447.50 L552.18,447.50 L569.51,412.50 L586.84,403.50 L604.18,407.50 L621.51,408.50 L638.84,408.50 L656.18,447.50 L673.51,448.50 L690.84,448.50 L708.17,448.50 L725.51,448.50 L742.84,448.50 L760.17,445.50 L777.51,445.50 L794.84,445.50 L812.17,445.50 L829.50,448.50 L846.84,448.50 L864.17,448.50 L881.50,448.50 L898.84,448.50 L916.17,448.50 L933.50,448.50 L950.84,448.50 L968.17,448.50 L985.50,448.50 L1002.84,448.50 L1020.17,448.50 L1037.50,448.50 L1054.83,448.50 L1072.17,448.50 L1089.50,448.50" stroke="#ff9830" fill="none" stroke-width="1" stroke-linejoin="round"/>
<path d="M49.52,451.50 L66.85,451.50 L84.19,451.50 L101.52,451.50 L118.85,451.50 L136.19,451.50 L153.52,451.50 L170.85,451.50 L188.18,451.50 L205.52,451.50 L222.85,451.50 L240.18,451.50 L257.52,451.50 L274.85,451.50 L292.18,451.50 L309.52,451.50 L326.85,451.50 L344.18,451.50 L361.51,451.50 L378.85,451.50 L396.18,451.50 L413.51,451.50 L430.85,451.50 L448.18,451.50 L465.51,451.50 L482.85,451.50 L500.18,451.50 L517.51,451.50 L534.84,451.50 L552.18,451.50 L569.51,451.50 L586.84,451.50 L604.18,451.50 L621.51,451.50 L638.84,451.50 L656.18,451.50 L673.51,451.50 L690.84,451.50 L708.17,451.50 L725.51,451.50 L742.84,451.50 L760.17,451.50 L777.51,451.50 L794.84,451.50 L812.17,451.50 L829.50,451.50 L846.84,451.50 L864.17,451.50 L881.50,451.50 L898.84,451.50 L916.17,451.50 L933.50,451.50 L950.84,451.50 L968.17,451.50 L985.50,451.50 L1002.84,451.50 L1020.17,451.50 L1037.50,451.50 L1054.83,451.50 L1072.17,451.50 L1089.50,451.50 L1089.50,450.8 L49.52,450.8 Z" stroke="none" fill="#f2495c" stroke-width="1" fill-opacity="0.1"/>
<path d="M49.52,451.50 L66.85,451.50 L84.19,451.50 L101.52,451.50 L118.85,451.50 L136.19,451.50 L153.52,451.50 L170.85,451.50 L188.18,451.50 L205.52,451.50 L222.85,451.50 L240.18,451.50 L257.52,451.50 L274.85,451.50 L292.18,451.50 L309.52,451.50 L326.85,451.50 L344.18,451.50 L361.51,451.50 L378.85,451.50 L396.18,451.50 L413.51,451.50 L430.85,451.50 L448.18,451.50 L465.51,451.50 L482.85,451.50 L500.18,451.50 L517.51,451.50 L534.84,451.50 L552.18,451.50 L569.51,451.50 L586.84,451.50 L604.18,451.50 L621.51,451.50 L638.84,451.50 L656.18,451.50 L673.51,451.50 L690.84,451.50 L708.17,451.50 L725.51,451.50 L742.84,451.50 L760.17,451.50 L777.51,451.50 L794.84,451.50 L812.17,451.50 L829.50,451.50 L846.84,451.50 L864.17,451.50 L881.50,451.50 L898.84,451.50 L916.17,451.50 L933.50,451.50 L950.84,451.50 L968.17,451.50 L985.50,451.50 L1002.84,451.50 L1020.17,451.50 L1037.50,451.50 L1054.83,451.50 L1072.17,451.50 L1089.50,451.50" stroke="#f2495c" fill="none" stroke-width="1" stroke-linejoin="round"/>
</g>
<text x="45.69" y="455.2" font-size="12.9" fill="#ccccdc" >0</text>
<text x="27.21" y="439.2" font-size="12.9" fill="#ccccdc" textLength="25.74" lengthAdjust="spacingAndGlyphs" >0.05</text>
<text x="36.64" y="422.2" font-size="12.9" fill="#ccccdc" textLength="16.29" lengthAdjust="spacingAndGlyphs" >0.1</text>
<text x="29.13" y="406.2" font-size="12.9" fill="#ccccdc" textLength="23.78" lengthAdjust="spacingAndGlyphs" >0.15</text>
<text x="34.77" y="389.2" font-size="12.9" fill="#ccccdc" textLength="18.29" lengthAdjust="spacingAndGlyphs" >0.2</text>
<text x="27.21" y="373.2" font-size="12.9" fill="#ccccdc" textLength="25.74" lengthAdjust="spacingAndGlyphs" >0.25</text>
<text x="34.64" y="357.2" font-size="12.9" fill="#ccccdc" textLength="18.28" lengthAdjust="spacingAndGlyphs" >0.3</text>
<text x="27.21" y="340.2" font-size="12.9" fill="#ccccdc" textLength="25.74" lengthAdjust="spacingAndGlyphs" >0.35</text>
<text x="34.52" y="324.2" font-size="12.9" fill="#ccccdc" textLength="18.28" lengthAdjust="spacingAndGlyphs" >0.4</text>
<text x="119.51" y="469.7" font-size="12.9" fill="#ccccdc" textLength="33.19" lengthAdjust="spacingAndGlyphs" >20:50</text>
<text x="206.21" y="469.7" font-size="12.9" fill="#ccccdc" textLength="33.19" lengthAdjust="spacingAndGlyphs" >20:55</text>
<text x="293.82" y="469.7" font-size="12.9" fill="#ccccdc" textLength="31.24" lengthAdjust="spacingAndGlyphs" >21:00</text>
<text x="380.51" y="469.7" font-size="12.9" fill="#ccccdc" textLength="31.24" lengthAdjust="spacingAndGlyphs" >21:05</text>
<text x="468.13" y="469.7" font-size="12.9" fill="#ccccdc" textLength="29.29" lengthAdjust="spacingAndGlyphs" >21:10</text>
<text x="554.82" y="469.7" font-size="12.9" fill="#ccccdc" textLength="29.29" lengthAdjust="spacingAndGlyphs" >21:15</text>
<text x="640.48" y="469.7" font-size="12.9" fill="#ccccdc" textLength="31.24" lengthAdjust="spacingAndGlyphs" >21:20</text>
<text x="727.17" y="469.7" font-size="12.9" fill="#ccccdc" textLength="31.24" lengthAdjust="spacingAndGlyphs" >21:25</text>
<text x="813.81" y="469.7" font-size="12.9" fill="#ccccdc" textLength="31.24" lengthAdjust="spacingAndGlyphs" >21:30</text>
<text x="900.50" y="469.7" font-size="12.9" fill="#ccccdc" textLength="31.24" lengthAdjust="spacingAndGlyphs" >21:35</text>
<text x="987.14" y="469.7" font-size="12.9" fill="#ccccdc" textLength="31.24" lengthAdjust="spacingAndGlyphs" >21:40</text>
<text x="1073.83" y="469.7" font-size="12.9" fill="#ccccdc" textLength="31.24" lengthAdjust="spacingAndGlyphs" >21:45</text>
<text x="1135.75" y="317.8" font-size="12.9" fill="#6e9fff" textLength="34.85" lengthAdjust="spacingAndGlyphs" >Name</text>
<text x="1252.40" y="317.8" font-size="12.9" fill="#6e9fff" textLength="31.85" lengthAdjust="spacingAndGlyphs" >Last *</text>
<rect x="1107" y="325" width="186" height="1" rx="0" fill="#2c2e34" />
<rect x="1107" y="349" width="186" height="1" rx="0" fill="#2c2e34" />
<rect x="1107" y="373" width="186" height="1" rx="0" fill="#2c2e34" />
<rect x="1107" y="396" width="186" height="1" rx="0" fill="#2c2e34" />
<rect x="1107" y="420" width="186" height="1" rx="0" fill="#2c2e34" />
<rect x="1107" y="444" width="186" height="1" rx="0" fill="#2c2e34" />
<rect x="1115" y="335" width="14" height="4" rx="2" fill="#73bf69" />
<text x="1135.93" y="341.6" font-size="12.9" fill="#ccccdc" textLength="25.98" lengthAdjust="spacingAndGlyphs" >infra</text>
<text x="1240.42" y="341.6" font-size="12.9" fill="#ccccdc" textLength="44.23" lengthAdjust="spacingAndGlyphs" >0.00181</text>
<rect x="1115" y="359" width="14" height="4" rx="2" fill="#fade2a" />
<text x="1135.94" y="365.6" font-size="12.9" fill="#ccccdc" textLength="75.25" lengthAdjust="spacingAndGlyphs" >kube-system</text>
<text x="1243.86" y="365.6" font-size="12.9" fill="#ccccdc" textLength="40.62" lengthAdjust="spacingAndGlyphs" >0.0234</text>
<rect x="1115" y="382" width="14" height="4" rx="2" fill="#5794f2" />
<text x="1135.93" y="388.6" font-size="12.9" fill="#ccccdc" textLength="62.35" lengthAdjust="spacingAndGlyphs" >monitoring</text>
<text x="1253.45" y="388.6" font-size="12.9" fill="#ccccdc" textLength="31.24" lengthAdjust="spacingAndGlyphs" >0.271</text>
<rect x="1115" y="406" width="14" height="4" rx="2" fill="#ff9830" />
<text x="1136.40" y="412.6" font-size="12.9" fill="#ccccdc" textLength="48.95" lengthAdjust="spacingAndGlyphs" >services</text>
<text x="1238.52" y="412.6" font-size="12.9" fill="#ccccdc" textLength="46.15" lengthAdjust="spacingAndGlyphs" >0.00861</text>
<rect x="1115" y="430" width="14" height="4" rx="2" fill="#f2495c" />
<text x="1136.60" y="436.6" font-size="12.9" fill="#ccccdc" textLength="21.51" lengthAdjust="spacingAndGlyphs" >test</text>
<text x="1229.12" y="436.6" font-size="12.9" fill="#ccccdc" textLength="55.52" lengthAdjust="spacingAndGlyphs" >0.000978</text>
<rect x="80" y="907" width="1018" height="1" rx="0" fill="rgba(204,204,220,0.12)" />
<rect x="80" y="891" width="1018" height="1" rx="0" fill="rgba(204,204,220,0.12)" />
<rect x="80" y="874" width="1018" height="1" rx="0" fill="rgba(204,204,220,0.12)" />
<rect x="80" y="858" width="1018" height="1" rx="0" fill="rgba(204,204,220,0.12)" />
<rect x="80" y="841" width="1018" height="1" rx="0" fill="rgba(204,204,220,0.12)" />
<rect x="80" y="825" width="1018" height="1" rx="0" fill="rgba(204,204,220,0.12)" />
<rect x="80" y="808" width="1018" height="1" rx="0" fill="rgba(204,204,220,0.12)" />
<rect x="80" y="792" width="1018" height="1" rx="0" fill="rgba(204,204,220,0.12)" />
<rect x="80" y="775" width="1018" height="1" rx="0" fill="rgba(204,204,220,0.12)" />
<rect x="156" y="765.6" width="1" height="145.69999999999993" rx="0" fill="rgba(204,204,220,0.12)" />
<rect x="241" y="765.6" width="1" height="145.69999999999993" rx="0" fill="rgba(204,204,220,0.12)" />
<rect x="326" y="765.6" width="1" height="145.69999999999993" rx="0" fill="rgba(204,204,220,0.12)" />
<rect x="411" y="765.6" width="1" height="145.69999999999993" rx="0" fill="rgba(204,204,220,0.12)" />
<rect x="495" y="765.6" width="1" height="145.69999999999993" rx="0" fill="rgba(204,204,220,0.12)" />
<rect x="580" y="765.6" width="1" height="145.69999999999993" rx="0" fill="rgba(204,204,220,0.12)" />
<rect x="665" y="765.6" width="1" height="145.69999999999993" rx="0" fill="rgba(204,204,220,0.12)" />
<rect x="750" y="765.6" width="1" height="145.69999999999993" rx="0" fill="rgba(204,204,220,0.12)" />
<rect x="835" y="765.6" width="1" height="145.69999999999993" rx="0" fill="rgba(204,204,220,0.12)" />
<rect x="919" y="765.6" width="1" height="145.69999999999993" rx="0" fill="rgba(204,204,220,0.12)" />
<rect x="1004" y="765.6" width="1" height="145.69999999999993" rx="0" fill="rgba(204,204,220,0.12)" />
<rect x="1089" y="765.6" width="1" height="145.69999999999993" rx="0" fill="rgba(204,204,220,0.12)" />
<clipPath id="memclip"><rect x="80" y="745.6" width="1010.3" height="165.69999999999993"/></clipPath>
<g clip-path="url(#memclip)">
<path d="M71.90,906.50 L88.86,906.50 L105.82,906.50 L122.78,906.50 L139.74,906.50 L156.70,906.50 L173.66,906.50 L190.62,906.50 L207.58,906.50 L224.54,906.50 L241.50,906.50 L258.46,906.50 L275.42,906.50 L292.38,906.50 L309.34,906.50 L326.30,906.50 L343.26,906.50 L360.22,906.50 L377.18,906.50 L394.14,906.50 L411.10,906.50 L428.06,906.50 L445.02,906.50 L461.98,906.50 L478.94,906.50 L495.90,906.50 L512.86,906.50 L529.82,906.50 L546.78,906.50 L563.74,906.50 L580.70,906.50 L597.66,906.50 L614.62,907.50 L631.58,907.50 L648.54,907.50 L665.50,907.50 L682.46,907.50 L699.42,907.50 L716.38,907.50 L733.34,907.50 L750.30,907.50 L767.26,906.50 L784.22,906.50 L801.18,906.50 L818.14,906.50 L835.10,906.50 L852.06,906.50 L869.02,906.50 L885.98,906.50 L902.94,906.50 L919.90,906.50 L936.86,906.50 L953.82,906.50 L970.78,906.50 L987.74,906.50 L1004.70,906.50 L1021.66,906.50 L1038.62,906.50 L1055.58,906.50 L1072.54,906.50 L1089.50,906.50 L1089.50,907.0 L71.90,907.0 Z" stroke="none" fill="#73bf69" stroke-width="1" fill-opacity="0.1"/>
<path d="M71.90,906.50 L88.86,906.50 L105.82,906.50 L122.78,906.50 L139.74,906.50 L156.70,906.50 L173.66,906.50 L190.62,906.50 L207.58,906.50 L224.54,906.50 L241.50,906.50 L258.46,906.50 L275.42,906.50 L292.38,906.50 L309.34,906.50 L326.30,906.50 L343.26,906.50 L360.22,906.50 L377.18,906.50 L394.14,906.50 L411.10,906.50 L428.06,906.50 L445.02,906.50 L461.98,906.50 L478.94,906.50 L495.90,906.50 L512.86,906.50 L529.82,906.50 L546.78,906.50 L563.74,906.50 L580.70,906.50 L597.66,906.50 L614.62,907.50 L631.58,907.50 L648.54,907.50 L665.50,907.50 L682.46,907.50 L699.42,907.50 L716.38,907.50 L733.34,907.50 L750.30,907.50 L767.26,906.50 L784.22,906.50 L801.18,906.50 L818.14,906.50 L835.10,906.50 L852.06,906.50 L869.02,906.50 L885.98,906.50 L902.94,906.50 L919.90,906.50 L936.86,906.50 L953.82,906.50 L970.78,906.50 L987.74,906.50 L1004.70,906.50 L1021.66,906.50 L1038.62,906.50 L1055.58,906.50 L1072.54,906.50 L1089.50,906.50" stroke="#73bf69" fill="none" stroke-width="1" stroke-linejoin="round"/>
<path d="M71.90,898.50 L88.86,898.50 L105.82,898.50 L122.78,898.50 L139.74,898.50 L156.70,898.50 L173.66,904.50 L190.62,897.50 L207.58,897.50 L224.54,897.50 L241.50,904.50 L258.46,897.50 L275.42,898.50 L292.38,898.50 L309.34,898.50 L326.30,898.50 L343.26,898.50 L360.22,898.50 L377.18,898.50 L394.14,898.50 L411.10,898.50 L428.06,898.50 L445.02,898.50 L461.98,898.50 L478.94,898.50 L495.90,898.50 L512.86,898.50 L529.82,898.50 L546.78,898.50 L563.74,897.50 L580.70,898.50 L597.66,898.50 L614.62,900.50 L631.58,900.50 L648.54,900.50 L665.50,900.50 L682.46,899.50 L699.42,899.50 L716.38,900.50 L733.34,899.50 L750.30,898.50 L767.26,898.50 L784.22,899.50 L801.18,899.50 L818.14,899.50 L835.10,899.50 L852.06,899.50 L869.02,901.50 L885.98,898.50 L902.94,898.50 L919.90,898.50 L936.86,899.50 L953.82,899.50 L970.78,898.50 L987.74,898.50 L1004.70,899.50 L1021.66,899.50 L1038.62,899.50 L1055.58,899.50 L1072.54,899.50 L1089.50,899.50 L1089.50,907.0 L71.90,907.0 Z" stroke="none" fill="#fade2a" stroke-width="1" fill-opacity="0.1"/>
<path d="M71.90,898.50 L88.86,898.50 L105.82,898.50 L122.78,898.50 L139.74,898.50 L156.70,898.50 L173.66,904.50 L190.62,897.50 L207.58,897.50 L224.54,897.50 L241.50,904.50 L258.46,897.50 L275.42,898.50 L292.38,898.50 L309.34,898.50 L326.30,898.50 L343.26,898.50 L360.22,898.50 L377.18,898.50 L394.14,898.50 L411.10,898.50 L428.06,898.50 L445.02,898.50 L461.98,898.50 L478.94,898.50 L495.90,898.50 L512.86,898.50 L529.82,898.50 L546.78,898.50 L563.74,897.50 L580.70,898.50 L597.66,898.50 L614.62,900.50 L631.58,900.50 L648.54,900.50 L665.50,900.50 L682.46,899.50 L699.42,899.50 L716.38,900.50 L733.34,899.50 L750.30,898.50 L767.26,898.50 L784.22,899.50 L801.18,899.50 L818.14,899.50 L835.10,899.50 L852.06,899.50 L869.02,901.50 L885.98,898.50 L902.94,898.50 L919.90,898.50 L936.86,899.50 L953.82,899.50 L970.78,898.50 L987.74,898.50 L1004.70,899.50 L1021.66,899.50 L1038.62,899.50 L1055.58,899.50 L1072.54,899.50 L1089.50,899.50" stroke="#fade2a" fill="none" stroke-width="1" stroke-linejoin="round"/>
<path d="M71.90,785.50 L88.86,785.50 L105.82,785.50 L122.78,785.50 L139.74,785.50 L156.70,784.50 L173.66,790.50 L190.62,784.50 L207.58,783.50 L224.54,783.50 L241.50,788.50 L258.46,784.50 L275.42,783.50 L292.38,781.50 L309.34,781.50 L326.30,781.50 L343.26,785.50 L360.22,787.50 L377.18,786.50 L394.14,788.50 L411.10,788.50 L428.06,786.50 L445.02,785.50 L461.98,786.50 L478.94,786.50 L495.90,790.50 L512.86,789.50 L529.82,789.50 L546.78,789.50 L563.74,789.50 L580.70,788.50 L597.66,788.50 L614.62,802.50 L631.58,800.50 L648.54,799.50 L665.50,797.50 L682.46,797.50 L699.42,797.50 L716.38,796.50 L733.34,796.50 L750.30,794.50 L767.26,792.50 L784.22,792.50 L801.18,792.50 L818.14,793.50 L835.10,792.50 L852.06,791.50 L869.02,838.50 L885.98,791.50 L902.94,790.50 L919.90,789.50 L936.86,789.50 L953.82,789.50 L970.78,789.50 L987.74,791.50 L1004.70,807.50 L1021.66,789.50 L1038.62,789.50 L1055.58,790.50 L1072.54,789.50 L1089.50,788.50 L1089.50,907.0 L71.90,907.0 Z" stroke="none" fill="#5794f2" stroke-width="1" fill-opacity="0.1"/>
<path d="M71.90,785.50 L88.86,785.50 L105.82,785.50 L122.78,785.50 L139.74,785.50 L156.70,784.50 L173.66,790.50 L190.62,784.50 L207.58,783.50 L224.54,783.50 L241.50,788.50 L258.46,784.50 L275.42,783.50 L292.38,781.50 L309.34,781.50 L326.30,781.50 L343.26,785.50 L360.22,787.50 L377.18,786.50 L394.14,788.50 L411.10,788.50 L428.06,786.50 L445.02,785.50 L461.98,786.50 L478.94,786.50 L495.90,790.50 L512.86,789.50 L529.82,789.50 L546.78,789.50 L563.74,789.50 L580.70,788.50 L597.66,788.50 L614.62,802.50 L631.58,800.50 L648.54,799.50 L665.50,797.50 L682.46,797.50 L699.42,797.50 L716.38,796.50 L733.34,796.50 L750.30,794.50 L767.26,792.50 L784.22,792.50 L801.18,792.50 L818.14,793.50 L835.10,792.50 L852.06,791.50 L869.02,838.50 L885.98,791.50 L902.94,790.50 L919.90,789.50 L936.86,789.50 L953.82,789.50 L970.78,789.50 L987.74,791.50 L1004.70,807.50 L1021.66,789.50 L1038.62,789.50 L1055.58,790.50 L1072.54,789.50 L1089.50,788.50" stroke="#5794f2" fill="none" stroke-width="1" stroke-linejoin="round"/>
<path d="M71.90,874.50 L88.86,874.50 L105.82,874.50 L122.78,874.50 L139.74,874.50 L156.70,874.50 L173.66,904.50 L190.62,874.50 L207.58,874.50 L224.54,874.50 L241.50,904.50 L258.46,874.50 L275.42,874.50 L292.38,874.50 L309.34,874.50 L326.30,874.50 L343.26,874.50 L360.22,874.50 L377.18,873.50 L394.14,874.50 L411.10,874.50 L428.06,874.50 L445.02,874.50 L461.98,874.50 L478.94,874.50 L495.90,874.50 L512.86,874.50 L529.82,874.50 L546.78,874.50 L563.74,874.50 L580.70,874.50 L597.66,875.50 L614.62,877.50 L631.58,877.50 L648.54,877.50 L665.50,878.50 L682.46,878.50 L699.42,878.50 L716.38,878.50 L733.34,878.50 L750.30,877.50 L767.26,877.50 L784.22,877.50 L801.18,877.50 L818.14,877.50 L835.10,876.50 L852.06,876.50 L869.02,878.50 L885.98,876.50 L902.94,876.50 L919.90,875.50 L936.86,875.50 L953.82,875.50 L970.78,875.50 L987.74,875.50 L1004.70,876.50 L1021.66,876.50 L1038.62,876.50 L1055.58,876.50 L1072.54,876.50 L1089.50,876.50 L1089.50,907.0 L71.90,907.0 Z" stroke="none" fill="#ff9830" stroke-width="1" fill-opacity="0.1"/>
<path d="M71.90,874.50 L88.86,874.50 L105.82,874.50 L122.78,874.50 L139.74,874.50 L156.70,874.50 L173.66,904.50 L190.62,874.50 L207.58,874.50 L224.54,874.50 L241.50,904.50 L258.46,874.50 L275.42,874.50 L292.38,874.50 L309.34,874.50 L326.30,874.50 L343.26,874.50 L360.22,874.50 L377.18,873.50 L394.14,874.50 L411.10,874.50 L428.06,874.50 L445.02,874.50 L461.98,874.50 L478.94,874.50 L495.90,874.50 L512.86,874.50 L529.82,874.50 L546.78,874.50 L563.74,874.50 L580.70,874.50 L597.66,875.50 L614.62,877.50 L631.58,877.50 L648.54,877.50 L665.50,878.50 L682.46,878.50 L699.42,878.50 L716.38,878.50 L733.34,878.50 L750.30,877.50 L767.26,877.50 L784.22,877.50 L801.18,877.50 L818.14,877.50 L835.10,876.50 L852.06,876.50 L869.02,878.50 L885.98,876.50 L902.94,876.50 L919.90,875.50 L936.86,875.50 L953.82,875.50 L970.78,875.50 L987.74,875.50 L1004.70,876.50 L1021.66,876.50 L1038.62,876.50 L1055.58,876.50 L1072.54,876.50 L1089.50,876.50" stroke="#ff9830" fill="none" stroke-width="1" stroke-linejoin="round"/>
<path d="M71.90,903.50 L88.86,903.50 L105.82,903.50 L122.78,903.50 L139.74,903.50 L156.70,903.50 L173.66,905.50 L190.62,903.50 L207.58,903.50 L224.54,903.50 L241.50,905.50 L258.46,903.50 L275.42,903.50 L292.38,903.50 L309.34,903.50 L326.30,903.50 L343.26,903.50 L360.22,903.50 L377.18,903.50 L394.14,903.50 L411.10,903.50 L428.06,903.50 L445.02,903.50 L461.98,903.50 L478.94,903.50 L495.90,903.50 L512.86,903.50 L529.82,903.50 L546.78,903.50 L563.74,903.50 L580.70,903.50 L597.66,903.50 L614.62,904.50 L631.58,904.50 L648.54,904.50 L665.50,904.50 L682.46,904.50 L699.42,904.50 L716.38,904.50 L733.34,904.50 L750.30,904.50 L767.26,904.50 L784.22,904.50 L801.18,904.50 L818.14,904.50 L835.10,904.50 L852.06,904.50 L869.02,906.50 L885.98,904.50 L902.94,904.50 L919.90,904.50 L936.86,904.50 L953.82,904.50 L970.78,904.50 L987.74,904.50 L1004.70,904.50 L1021.66,903.50 L1038.62,903.50 L1055.58,903.50 L1072.54,903.50 L1089.50,903.50 L1089.50,907.0 L71.90,907.0 Z" stroke="none" fill="#f2495c" stroke-width="1" fill-opacity="0.1"/>
<path d="M71.90,903.50 L88.86,903.50 L105.82,903.50 L122.78,903.50 L139.74,903.50 L156.70,903.50 L173.66,905.50 L190.62,903.50 L207.58,903.50 L224.54,903.50 L241.50,905.50 L258.46,903.50 L275.42,903.50 L292.38,903.50 L309.34,903.50 L326.30,903.50 L343.26,903.50 L360.22,903.50 L377.18,903.50 L394.14,903.50 L411.10,903.50 L428.06,903.50 L445.02,903.50 L461.98,903.50 L478.94,903.50 L495.90,903.50 L512.86,903.50 L529.82,903.50 L546.78,903.50 L563.74,903.50 L580.70,903.50 L597.66,903.50 L614.62,904.50 L631.58,904.50 L648.54,904.50 L665.50,904.50 L682.46,904.50 L699.42,904.50 L716.38,904.50 L733.34,904.50 L750.30,904.50 L767.26,904.50 L784.22,904.50 L801.18,904.50 L818.14,904.50 L835.10,904.50 L852.06,904.50 L869.02,906.50 L885.98,904.50 L902.94,904.50 L919.90,904.50 L936.86,904.50 L953.82,904.50 L970.78,904.50 L987.74,904.50 L1004.70,904.50 L1021.66,903.50 L1038.62,903.50 L1055.58,903.50 L1072.54,903.50 L1089.50,903.50" stroke="#f2495c" fill="none" stroke-width="1" stroke-linejoin="round"/>
</g>
<text x="56.99" y="911.2" font-size="12.9" fill="#ccccdc" textLength="18.13" lengthAdjust="spacingAndGlyphs" >0 B</text>
<text x="28.93" y="895.2" font-size="12.9" fill="#ccccdc" textLength="46.25" lengthAdjust="spacingAndGlyphs" >256 MiB</text>
<text x="30.83" y="878.2" font-size="12.9" fill="#ccccdc" textLength="44.32" lengthAdjust="spacingAndGlyphs" >512 MiB</text>
<text x="28.93" y="862.2" font-size="12.9" fill="#ccccdc" textLength="46.25" lengthAdjust="spacingAndGlyphs" >768 MiB</text>
<text x="46.43" y="845.2" font-size="12.9" fill="#ccccdc" textLength="28.66" lengthAdjust="spacingAndGlyphs" >1 GiB</text>
<text x="28.14" y="829.2" font-size="12.9" fill="#ccccdc" textLength="46.98" lengthAdjust="spacingAndGlyphs" >1.25 GiB</text>
<text x="28.14" y="812.2" font-size="12.9" fill="#ccccdc" textLength="46.98" lengthAdjust="spacingAndGlyphs" >1.50 GiB</text>
<text x="28.14" y="796.2" font-size="12.9" fill="#ccccdc" textLength="46.98" lengthAdjust="spacingAndGlyphs" >1.75 GiB</text>
<text x="44.48" y="779.2" font-size="12.9" fill="#ccccdc" textLength="30.65" lengthAdjust="spacingAndGlyphs" >2 GiB</text>
<text x="140.02" y="925.8" font-size="12.9" fill="#ccccdc" textLength="33.19" lengthAdjust="spacingAndGlyphs" >20:50</text>
<text x="224.86" y="925.8" font-size="12.9" fill="#ccccdc" textLength="33.19" lengthAdjust="spacingAndGlyphs" >20:55</text>
<text x="310.60" y="925.8" font-size="12.9" fill="#ccccdc" textLength="31.24" lengthAdjust="spacingAndGlyphs" >21:00</text>
<text x="395.43" y="925.8" font-size="12.9" fill="#ccccdc" textLength="31.24" lengthAdjust="spacingAndGlyphs" >21:05</text>
<text x="481.18" y="925.8" font-size="12.9" fill="#ccccdc" textLength="29.29" lengthAdjust="spacingAndGlyphs" >21:10</text>
<text x="566.01" y="925.8" font-size="12.9" fill="#ccccdc" textLength="29.29" lengthAdjust="spacingAndGlyphs" >21:15</text>
<text x="649.80" y="925.8" font-size="12.9" fill="#ccccdc" textLength="31.24" lengthAdjust="spacingAndGlyphs" >21:20</text>
<text x="734.63" y="925.8" font-size="12.9" fill="#ccccdc" textLength="31.24" lengthAdjust="spacingAndGlyphs" >21:25</text>
<text x="819.40" y="925.8" font-size="12.9" fill="#ccccdc" textLength="31.24" lengthAdjust="spacingAndGlyphs" >21:30</text>
<text x="904.23" y="925.8" font-size="12.9" fill="#ccccdc" textLength="31.24" lengthAdjust="spacingAndGlyphs" >21:35</text>
<text x="989.00" y="925.8" font-size="12.9" fill="#ccccdc" textLength="31.24" lengthAdjust="spacingAndGlyphs" >21:40</text>
<text x="1073.83" y="925.8" font-size="12.9" fill="#ccccdc" textLength="31.24" lengthAdjust="spacingAndGlyphs" >21:45</text>
<text x="1135.75" y="773.8" font-size="12.9" fill="#6e9fff" textLength="34.85" lengthAdjust="spacingAndGlyphs" >Name</text>
<text x="1252.40" y="773.8" font-size="12.9" fill="#6e9fff" textLength="31.85" lengthAdjust="spacingAndGlyphs" >Last *</text>
<rect x="1107" y="781" width="186" height="1" rx="0" fill="#2c2e34" />
<rect x="1107" y="805" width="186" height="1" rx="0" fill="#2c2e34" />
<rect x="1107" y="829" width="186" height="1" rx="0" fill="#2c2e34" />
<rect x="1107" y="852" width="186" height="1" rx="0" fill="#2c2e34" />
<rect x="1107" y="876" width="186" height="1" rx="0" fill="#2c2e34" />
<rect x="1107" y="900" width="186" height="1" rx="0" fill="#2c2e34" />
<rect x="1115" y="791" width="14" height="4" rx="2" fill="#73bf69" />
<text x="1135.93" y="797.6" font-size="12.9" fill="#ccccdc" textLength="25.98" lengthAdjust="spacingAndGlyphs" >infra</text>
<text x="1237.06" y="797.6" font-size="12.9" fill="#ccccdc" textLength="47.66" lengthAdjust="spacingAndGlyphs" >12.2 MiB</text>
<rect x="1115" y="815" width="14" height="4" rx="2" fill="#fade2a" />
<text x="1135.94" y="821.6" font-size="12.9" fill="#ccccdc" textLength="75.25" lengthAdjust="spacingAndGlyphs" >kube-system</text>
<text x="1240.45" y="821.6" font-size="12.9" fill="#ccccdc" textLength="44.30" lengthAdjust="spacingAndGlyphs" >124 MiB</text>
<rect x="1115" y="838" width="14" height="4" rx="2" fill="#5794f2" />
<text x="1135.93" y="844.6" font-size="12.9" fill="#ccccdc" textLength="62.35" lengthAdjust="spacingAndGlyphs" >monitoring</text>
<text x="1239.65" y="844.6" font-size="12.9" fill="#ccccdc" textLength="45.04" lengthAdjust="spacingAndGlyphs" >1.81 GiB</text>
<rect x="1115" y="862" width="14" height="4" rx="2" fill="#ff9830" />
<text x="1136.40" y="868.6" font-size="12.9" fill="#ccccdc" textLength="48.95" lengthAdjust="spacingAndGlyphs" >services</text>
<text x="1238.52" y="868.6" font-size="12.9" fill="#ccccdc" textLength="46.25" lengthAdjust="spacingAndGlyphs" >490 MiB</text>
<rect x="1115" y="886" width="14" height="4" rx="2" fill="#f2495c" />
<text x="1136.60" y="892.6" font-size="12.9" fill="#ccccdc" textLength="21.51" lengthAdjust="spacingAndGlyphs" >test</text>
<text x="1235.14" y="892.6" font-size="12.9" fill="#ccccdc" textLength="49.61" lengthAdjust="spacingAndGlyphs" >56.3 MiB</text>
</svg>
</body></html>
